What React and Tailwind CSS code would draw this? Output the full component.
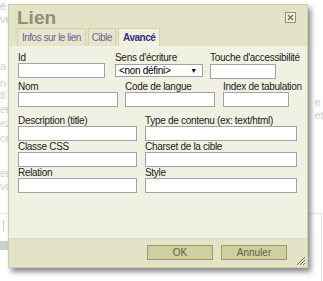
import React from "react";

function Field({ label, w, labelClass = "" }) {
  return (
    <div className="flex flex-col">
      <span className={"h-[11px] leading-[11px] whitespace-nowrap text-[#222] " + labelClass}>{label}</span>
      <div className={"h-[15px] border border-[#a3a3a3] bg-white " + w}></div>
    </div>
  );
}

export default function App() {
  return (
    <div
      className="relative w-[323px] h-[281px] bg-white overflow-hidden text-[10px] tracking-[-0.3px]"
      style={{ fontFamily: '"Liberation Sans", Arial, sans-serif' }}
    >
      {/* faded background page */}
      <div className="absolute left-0 top-0 text-[11px] leading-[13px] text-[#c8c8c8]">
        <div>é</div>
        <div>ve</div>
      </div>
      <div className="absolute left-0 top-[60px] text-[11px] leading-[12px] text-[#d0d0d0]">
        <div className="h-[17px]">a</div>
        <div className="h-[12px]">n</div>
        <div className="h-[14px]">ti</div>
        <div className="h-[14px]">en</div>
        <div className="h-[15px]">ez</div>
        <div className="h-[35px]">ce</div>
        <div className="h-[13px]">és</div>
        <div>vc</div>
      </div>
      <div className="absolute right-0 top-[96px] text-[11px] leading-[13px] text-[#d0d0d0]">
        <div>e</div>
        <div>et</div>
      </div>
      <div className="absolute left-0 top-[213px] w-[323px] h-px bg-[#e8e8e8]"></div>
      <div className="absolute left-[3px] top-[220px] w-px h-[12px] bg-[#cccccc]"></div>
      <div className="absolute left-0 top-[241px] w-[8px] h-[9px] bg-[#c9d0d4]"></div>
      <div className="absolute left-[321px] top-[214px] w-px h-[67px] bg-[#e3e3e3]"></div>

      {/* dialog */}
      <div className="absolute left-[8px] top-[4px] w-[300px] h-[264px] border border-[#cfcf9f] bg-[#f1f1e3] shadow-[3px_4px_5px_rgba(0,0,0,0.45)] flex flex-col">
        {/* title + tabs */}
        <div className="bg-[#e3e3c7] px-[8px] pt-[3px] relative">
          <div className="h-[20px] text-[19px] font-bold leading-[20px] tracking-normal text-[#8f8f73]">Lien</div>
          <div className="absolute right-[11px] top-[7px] w-[11px] h-[11px] border border-[#8f8f7a] bg-[#eeeedf] flex items-center justify-center">
            <svg width="7" height="7" viewBox="0 0 7 7">
              <path d="M1 1L6 6M6 1L1 6" stroke="#6f6f5f" strokeWidth="1.2" />
            </svg>
          </div>
          <div className="flex items-end gap-[2px] tracking-[-0.5px]">
            <div className="h-[18px] px-[4px] border border-b-0 border-[#d3d3a8] bg-[#e6e6cc] text-[#6f5f94] flex items-center">
              Infos sur le lien
            </div>
            <div className="h-[18px] px-[3px] border border-b-0 border-[#d3d3a8] bg-[#e6e6cc] text-[#6f5f94] flex items-center">
              Cible
            </div>
            <div className="h-[18px] px-[4px] border border-b-0 border-[#d3d3a8] bg-[#f1f1e3] text-[#2f2f86] font-bold flex items-center">
              Avancé
            </div>
          </div>
        </div>

        {/* body */}
        <div className="flex-1 px-[9px] pt-[6px] flex flex-col">
          <div className="flex">
            <Field label="Id" w="w-[87px]" />
            <div className="flex flex-col ml-[10px]">
              <span className="h-[11px] leading-[11px] whitespace-nowrap text-[#222]">Sens d'écriture</span>
              <div className="mt-[1px] w-[88px] h-[13px] border border-[#a3a3a3] bg-white flex items-center justify-between pl-[3px] pr-[5px] text-[10px] leading-[11px]">
                <span>&lt;non défini&gt;</span>
                <span className="text-[7px]">▼</span>
              </div>
            </div>
            <div className="ml-[7px] flex flex-col">
              <span className="h-[12px] leading-[11px] whitespace-nowrap text-[#222]">Touche d'accessibilité</span>
              <div className="w-[66px] h-[15px] border border-[#a3a3a3] bg-white"></div>
            </div>
          </div>
          <div className="flex gap-[7px] mt-[2px]">
            <Field label="Nom" w="w-[100px]" />
            <Field label="Code de langue" w="w-[90px]" />
            <div className="ml-[1px]">
              <Field label="Index de tabulation" w="w-[66px]" labelClass="text-[#3a3050]" />
            </div>
          </div>
          <div className="flex gap-[8px] mt-[8px]">
            <Field label="Description (title)" w="w-[119px]" />
            <Field label="Type de contenu (ex: text/html)" w="w-[152px]" />
          </div>
          <div className="flex gap-[8px]">
            <Field label="Classe CSS" w="w-[119px]" />
            <Field label="Charset de la cible" w="w-[152px]" />
          </div>
          <div className="flex gap-[8px]">
            <Field label="Relation" w="w-[119px]" />
            <Field label="Style" w="w-[152px]" />
          </div>
        </div>

        {/* footer */}
        <div className="h-[29px] border-t border-[#dcdcc0] bg-[#e3e3c7] flex items-center justify-end gap-[8px] pr-[20px] pb-[1px] relative">
          <div className="w-[66px] h-[15px] border border-[#9a9a72] bg-[#cfcf9f] text-[#5f5f4a] tracking-normal flex items-center justify-center">OK</div>
          <div className="w-[66px] h-[15px] border border-[#9a9a72] bg-[#cfcf9f] text-[#5f5f4a] tracking-normal flex items-center justify-center">Annuler</div>
          <svg className="absolute right-[1px] bottom-[1px]" width="10" height="10" viewBox="0 0 10 10">
            <path d="M9 1L1 9M9 4L4 9M9 7L7 9" stroke="#6f6f5a" strokeWidth="1" />
          </svg>
        </div>
      </div>
    </div>
  );
}
